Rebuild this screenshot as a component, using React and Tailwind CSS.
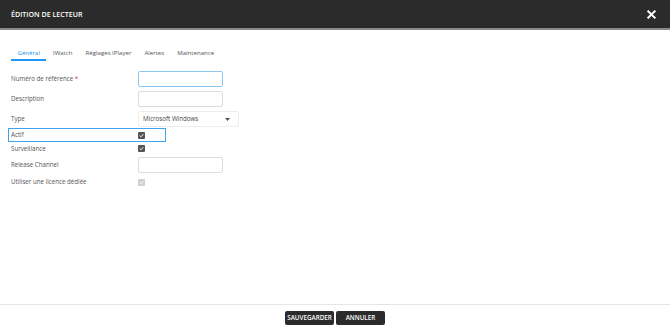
import React from "react";

function Check({ disabled }) {
  return (
    <div
      className={`w-[7px] h-[7px] rounded-[1px] flex items-center justify-center ${
        disabled ? "bg-[#d0d0d0]" : "bg-[#555555]"
      }`}
    >
      <svg width="5" height="5" viewBox="0 0 10 10">
        <path d="M1.5 5.2 L4 7.6 L8.6 2.4" stroke="#fff" strokeWidth="1.8" fill="none" />
      </svg>
    </div>
  );
}

export default function App() {
  const tabs = ["Général", "IWatch", "Réglages IPlayer", "Alertes", "Maintenance"];
  return (
    <div
      className="w-[670px] h-[332px] flex flex-col bg-white text-[#555]"
      style={{ fontFamily: '"Open Sans", "Liberation Sans", sans-serif' }}
    >
      <div className="h-[30px] bg-[#2b2b2b] flex items-center justify-between pl-[11px] pr-[14px] border-b-[2px] border-[#8a8a8a] shrink-0">
        <span className="text-white text-[7.1px] font-semibold">ÉDITION DE LECTEUR</span>
        <svg width="9" height="9" viewBox="0 0 10 10">
          <path d="M1.5 1.5 L8.5 8.5 M8.5 1.5 L1.5 8.5" stroke="#fff" strokeWidth="2.2" strokeLinecap="square" />
        </svg>
      </div>
      <div className="flex-1 flex flex-col">
        <div className="flex pl-[11px] mt-[13px]">
          {tabs.map((t, i) => (
            <div
              key={t}
              className={`px-[6.5px] h-[18px] flex items-start pt-[5px] text-[6.1px] ${
                i === 0 ? "text-[#2196f3] border-b-[2px] border-[#2196f3]" : "text-[#555] border-b-[2px] border-transparent"
              }`}
            >
              {t}
            </div>
          ))}
        </div>
        <div className="flex flex-col pl-[11px] mt-[10px] text-[6.2px]">
          <div className="flex items-center h-[16px]">
            <div className="w-[127px]">
              Numéro de référence <span className="text-[#e53935]">*</span>
            </div>
            <div className="w-[85px] h-[16px] border border-[#8cc7f0] rounded-[2px]" />
          </div>
          <div className="flex items-center h-[16px] mt-[4px]">
            <div className="w-[127px]">Description</div>
            <div className="w-[85px] h-[16px] border border-[#dddddd] rounded-[2px]" />
          </div>
          <div className="flex items-center h-[16px] mt-[4px]">
            <div className="w-[127px]">Type</div>
            <div className="w-[101px] h-[16px] border border-[#eeeeee] rounded-[2px] flex items-center justify-between pl-[4px] pr-[8px] text-[#444]">
              <span>Microsoft Windows</span>
              <svg width="5" height="3" viewBox="0 0 5 3">
                <path d="M0 0 H5 L2.5 3 Z" fill="#555" />
              </svg>
            </div>
          </div>
          <div className="flex items-center h-[14px] mt-[1px] w-[158px] ml-[-3px] pl-[2px] border border-[#3da5f0]">
            <div className="w-[127px]">Actif</div>
            <Check />
          </div>
          <div className="flex items-center h-[13px]">
            <div className="w-[127px]">Surveillance</div>
            <Check />
          </div>
          <div className="flex items-center h-[16px] mt-[2px]">
            <div className="w-[127px]">Release Channel</div>
            <div className="w-[85px] h-[16px] border border-[#dddddd] rounded-[2px]" />
          </div>
          <div className="flex items-center h-[14px] mt-[2px]">
            <div className="w-[127px]">Utiliser une licence dédiée</div>
            <Check disabled />
          </div>
        </div>
      </div>
      <div className="h-[28px] border-t border-[#e5e5e5] flex items-start justify-center pt-[6px] gap-[2px] shrink-0">
        <button className="w-[49px] h-[14px] bg-[#2b2b2b] text-white text-[6.3px] font-semibold rounded-[2px] flex items-center justify-center">
          SAUVEGARDER
        </button>
        <button className="w-[49px] h-[14px] bg-[#2b2b2b] text-white text-[6.3px] font-semibold rounded-[2px] flex items-center justify-center">
          ANNULER
        </button>
      </div>
    </div>
  );
}
